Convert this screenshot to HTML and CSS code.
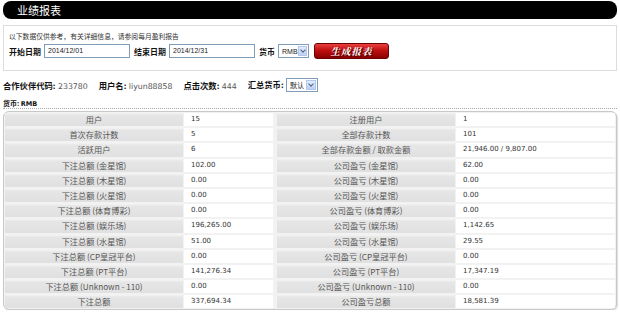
FILE: index.html
```html
<!DOCTYPE html>
<html lang="zh-CN">
<head>
    <meta charset="UTF-8">
    <title>业绩报表</title>
    <link rel="stylesheet" href="styles.css">
</head>
<body>
<div class="page">
    <div class="title-bar">业绩报表</div>

    <div class="filter">
        <p class="note">以下数据仅供参考，有关详细信息，请参阅每月盈利报告</p>
        <div class="filter-row">
            <label>开始日期</label>
            <span class="input date">2014/12/01</span>
            <label>结束日期</label>
            <span class="input date">2014/12/31</span>
            <label>货币</label>
            <span class="select">RMB<i class="arrow"></i></span>
            <span class="btn">生成报表</span>
        </div>
    </div>

    <div class="info">
        <span class="item"><b>合作伙伴代码:</b> 233780</span>
        <span class="item"><b>用户名:</b> liyun88858</span>
        <span class="item"><b>点击次数:</b> 444</span>
        <span class="item"><b>汇总货币:</b> <span class="select small">默认<i class="arrow"></i></span></span>
    </div>

    <div class="currency"><b>货币:</b> <b class="code">RMB</b></div>

    <div class="report">
        <div class="lbl">用户</div><div class="val v1">15</div>
        <div class="lbl">注册用户</div><div class="val">1</div>

        <div class="lbl">首次存款计数</div><div class="val v1">5</div>
        <div class="lbl">全部存款计数</div><div class="val">101</div>

        <div class="lbl">活跃用户</div><div class="val v1">6</div>
        <div class="lbl">全部存款金额 / 取款金额</div><div class="val">21,946.00 / 9,807.00</div>

        <div class="lbl">下注总额 (金星馆)</div><div class="val v1">102.00</div>
        <div class="lbl">公司盈亏 (金星馆)</div><div class="val">62.00</div>

        <div class="lbl">下注总额 (木星馆)</div><div class="val v1">0.00</div>
        <div class="lbl">公司盈亏 (木星馆)</div><div class="val">0.00</div>

        <div class="lbl">下注总额 (火星馆)</div><div class="val v1">0.00</div>
        <div class="lbl">公司盈亏 (火星馆)</div><div class="val">0.00</div>

        <div class="lbl">下注总额 (体育博彩)</div><div class="val v1">0.00</div>
        <div class="lbl">公司盈亏 (体育博彩)</div><div class="val">0.00</div>

        <div class="lbl">下注总额 (娱乐场)</div><div class="val v1">196,265.00</div>
        <div class="lbl">公司盈亏 (娱乐场)</div><div class="val">1,142.65</div>

        <div class="lbl">下注总额 (水星馆)</div><div class="val v1">51.00</div>
        <div class="lbl">公司盈亏 (水星馆)</div><div class="val">29.55</div>

        <div class="lbl">下注总额 (CP皇冠平台)</div><div class="val v1">0.00</div>
        <div class="lbl">公司盈亏 (CP皇冠平台)</div><div class="val">0.00</div>

        <div class="lbl">下注总额 (PT平台)</div><div class="val v1">141,276.34</div>
        <div class="lbl">公司盈亏 (PT平台)</div><div class="val">17,347.19</div>

        <div class="lbl">下注总额 (Unknown - 110)</div><div class="val v1">0.00</div>
        <div class="lbl">公司盈亏 (Unknown - 110)</div><div class="val">0.00</div>

        <div class="lbl">下注总额</div><div class="val v1">337,694.34</div>
        <div class="lbl">公司盈亏总额</div><div class="val">18,581.39</div>
    </div>
</div>
</body>
</html>
```

FILE: styles.css
```css
* {
    margin: 0;
    padding: 0;
    box-sizing: border-box;
}

body {
    font-family: "DejaVu Sans", "Noto Sans CJK SC", sans-serif;
    font-size: 8px;
    color: #333;
    background: #fff;
}

.page {
    padding: 1px 3px 0;
}

.title-bar {
    height: 18px;
    line-height: 18px;
    background: #000;
    color: #fff;
    border-radius: 8px;
    padding-left: 14px;
    font-family: "Noto Sans CJK SC", sans-serif;
    font-size: 11px;
}

.filter {
    margin-top: 6px;
    height: 46px;
    border: 1px solid #ddd;
    padding: 5px 5px 0;
}

.note {
    font-family: "Noto Sans CJK SC", sans-serif;
    font-size: 6.8px;
    color: #333;
    line-height: 10px;
}

.filter-row {
    display: flex;
    align-items: center;
    margin-top: 3px;
    height: 14px;
}

.filter-row label {
    font-family: "Noto Sans CJK SC", sans-serif;
    font-weight: bold;
    font-size: 8px;
    color: #111;
    margin-right: 3px;
}

.input {
    height: 14px;
    line-height: 12px;
    border: 1px solid #7f9db9;
    background: #fff;
    padding-left: 3px;
    font-family: "Liberation Sans", sans-serif;
    font-size: 7px;
    color: #222;
    margin-right: 4px;
}

.date {
    width: 86px;
}

.select {
    display: inline-flex;
    align-items: center;
    justify-content: space-between;
    width: 31px;
    height: 14px;
    border: 1px solid #7f9db9;
    background: #fff;
    padding-left: 3px;
    font-family: "Liberation Sans", "Noto Sans CJK SC", sans-serif;
    font-size: 7px;
    color: #222;
    vertical-align: middle;
}

.select .arrow {
    width: 10px;
    height: 10px;
    margin-right: 1px;
    background: linear-gradient(#e4ecfc, #bccff4);
    border: 1px solid #b2c6ee;
    position: relative;
}

.select .arrow::after {
    content: "";
    position: absolute;
    left: 2px;
    top: 1px;
    width: 3px;
    height: 3px;
    border-right: 1px solid #4d6185;
    border-bottom: 1px solid #4d6185;
    transform: rotate(45deg);
}

.btn {
    margin-left: 5px;
    width: 75px;
    height: 16px;
    line-height: 14px;
    border-radius: 3px;
    background: linear-gradient(#e84040 0%, #c01010 45%, #8a0000 100%);
    border: 1px solid #6d0000;
    color: #fff;
    text-align: center;
    font-family: "Noto Serif CJK SC", "Noto Sans CJK SC", serif;
    font-style: italic;
    font-weight: bold;
    font-size: 9.5px;
    text-shadow: 1px 1px 0 #400;
    letter-spacing: 1px;
}

.info {
    display: flex;
    align-items: center;
    margin-top: 7px;
    height: 14px;
    color: #555;
    font-size: 7.8px;
}

.item {
    margin-right: 11px;
}

.info b {
    font-family: "Noto Sans CJK SC", sans-serif;
    color: #111;
    font-size: 8.3px;
}

.select.small {
    width: 32px;
}

.currency {
    margin-top: 6px;
    height: 11px;
    line-height: 10px;
    border-bottom: 1px dotted #aaa;
    font-family: "Noto Sans CJK SC", sans-serif;
    font-size: 7px;
    color: #111;
}

.currency .code {
    font-family: "DejaVu Sans", sans-serif;
    font-size: 6.5px;
}

.report {
    margin-top: 2px;
    border: 1px solid #c8c8c8;
    border-radius: 6px;
    padding: 1px;
    background: #f2f2f2;
    display: grid;
    grid-template-columns: 178px 92px 178px 1fr;
    grid-auto-rows: 13.2px;
    column-gap: 1px;
    row-gap: 2px;
    box-shadow: 1px 1px 1px #ddd;
}

.lbl {
    background: linear-gradient(#f4f4f4 0, #e6e6e6 2px, #e0e0e0 100%);
    color: #555;
    text-align: center;
    line-height: 13px;
    font-size: 8.2px;
    font-family: "Noto Sans CJK SC", "DejaVu Sans", sans-serif;
}

.val {
    background: #fff;
    line-height: 13px;
    padding-left: 7px;
    font-size: 7px;
    color: #333;
}

.v1 {
    margin-right: 3px;
}
```
